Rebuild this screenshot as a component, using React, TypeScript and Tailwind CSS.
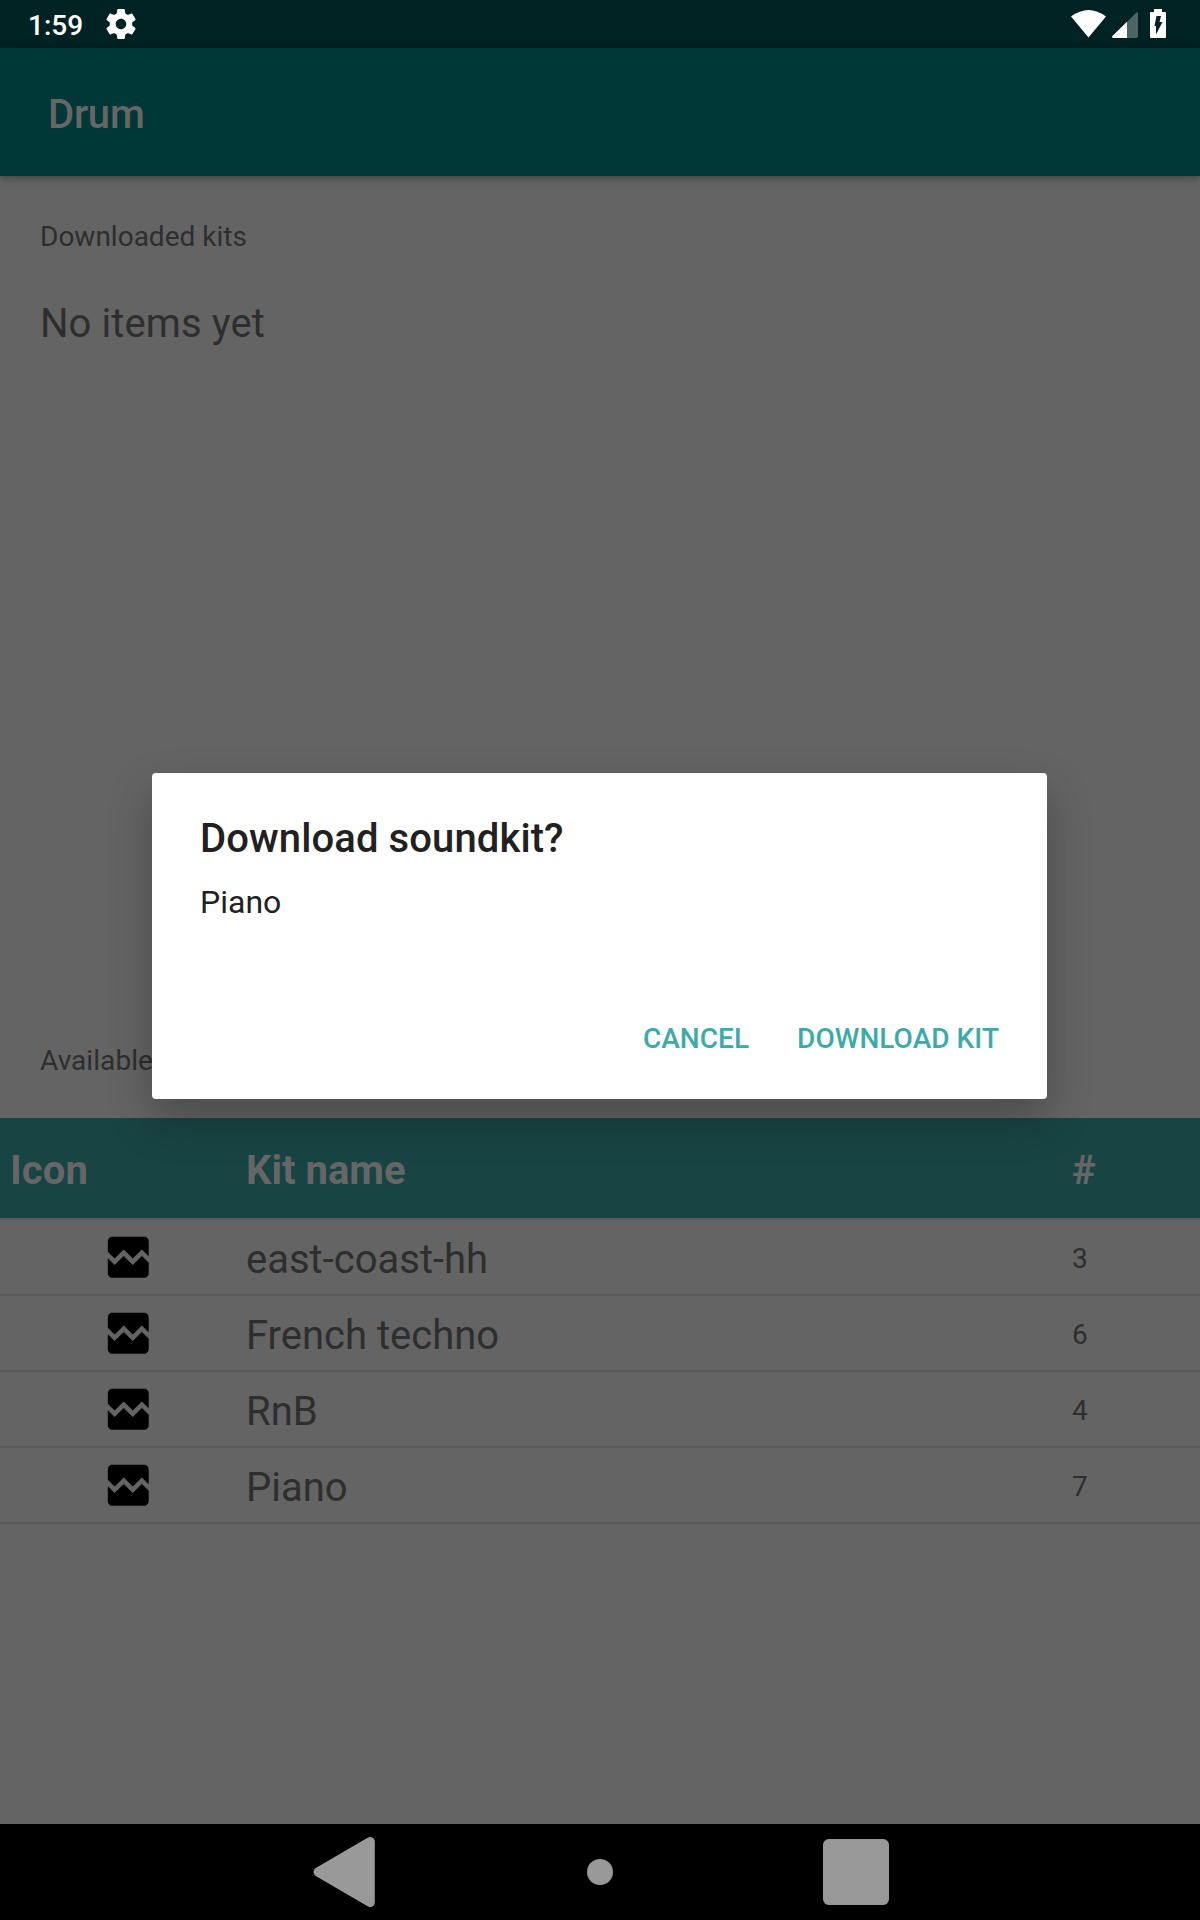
const kits = [
  { name: "east-coast-hh", count: 3 },
  { name: "French techno", count: 6 },
  { name: "RnB", count: 4 },
  { name: "Piano", count: 7 },
];

function BrokenImageIcon() {
  return (
    <svg viewBox="0 0 24 24" className="block h-[54.500px] w-[54.500px] fill-black">
      <path d="M21 5v6.59l-3-3.01-4 4.01-4-4-4 4-3-3.01V5c0-1.1.9-2 2-2h14c1.1 0 2 .9 2 2zm-3 6.42l3 3.01V19c0 1.1-.9 2-2 2H5c-1.1 0-2-.9-2-2v-6.58l3 2.99 4-4 4 4 4-3.99z" />
    </svg>
  );
}

function StatusBar() {
  return (
    <header className="flex h-12 shrink-0 bg-[#002222] text-white">
      <span className="ml-[28px] w-[72px] pt-[2px] text-[28px] leading-[48px] font-medium">1:59</span>
      <svg viewBox="0 0 24 24" className="ml-[3px] mt-[6px] block h-[36px] w-[36px] fill-white">
        <path d="M19.43 12.98c.04-.32.07-.64.07-.98s-.03-.66-.07-.98l2.11-1.65c.19-.15.24-.42.12-.64l-2-3.46c-.12-.22-.39-.3-.61-.22l-2.49 1c-.52-.4-1.08-.73-1.69-.98l-.38-2.65C14.46 2.18 14.25 2 14 2h-4c-.25 0-.46.18-.49.42l-.38 2.65c-.61.25-1.17.59-1.69.98l-2.49-1c-.23-.09-.49 0-.61.22l-2 3.46c-.13.22-.07.49.12.64l2.11 1.65c-.04.32-.07.65-.07.98s.03.66.07.98l-2.11 1.65c-.19.15-.24.42-.12.64l2 3.46c.12.22.39.3.61.22l2.49-1c.52.4 1.08.73 1.69.98l.38 2.65c.03.24.24.42.49.42h4c.25 0 .46-.18.49-.42l.38-2.65c.61-.25 1.17-.59 1.69-.98l2.49 1c.23.09.49 0 .61-.22l2-3.46c.12-.22.07-.49-.12-.64l-2.11-1.65zM12 15.5c-1.93 0-3.5-1.57-3.5-3.5s1.57-3.5 3.5-3.5 3.5 1.57 3.5 3.5-1.57 3.5-3.5 3.5z" />
      </svg>
      <div className="ml-auto mr-[34px] flex">
        <svg viewBox="0 0 36 48" className="block h-12 w-9">
          <path d="M0 16.5Q17.500 3.5 35 16.5L17.500 37.5Z" fill="white" />
        </svg>
        <svg viewBox="0 0 27 48" className="ml-[5px] block h-12 w-[27px]">
          <path d="M26 13.5V36Q26 38 24 38H1Q-.5 37.500 .5 36L24.500 12.500Q26 11.500 26 13.500Z" fill="#4d6464" />
          <path d="M15 21.800V38H1Q-.5 37.500 .5 36Z" fill="white" />
        </svg>
        <svg viewBox="0 0 16 48" className="ml-[11px] block h-12 w-4">
          <path d="M4 9H12V12H15Q16 12 16 13V37Q16 38 15 38H1Q0 38 0 37V13Q0 12 1 12H4Z" fill="white" />
          <path d="M6.500 16H11L9.500 22H12.500L6 34.500V26H4.500Z" fill="#002222" />
        </svg>
      </div>
    </header>
  );
}

function KitTable() {
  return (
    <div>
      <div className="flex h-[102px] border-b-2 border-[#5a5a5a] bg-[#184443] text-[40px] leading-[105px] font-bold text-[#666666]">
        <span className="w-[246px] pl-[10px] tracking-[0.1px]">Icon</span>
        <span className="w-[826px]">Kit name</span>
        <span>#</span>
      </div>
      {kits.map((kit) => (
        <div key={kit.name} className="flex h-[76px] border-b-2 border-[#5a5a5a] text-[#2e2e2e]">
          <span className="w-[246px] pl-[100.700px] pt-[9.700px]">
            <BrokenImageIcon />
          </span>
          <span className="w-[826px] text-[40px] leading-[80px]">{kit.name}</span>
          <span className="text-[28px] leading-[77px]">{kit.count}</span>
        </div>
      ))}
    </div>
  );
}

function DownloadDialog() {
  return (
    <div
      role="dialog"
      className="absolute left-[152px] top-[773px] flex h-[326px] w-[895px] flex-col rounded-[4px] bg-white px-12 text-[#212121] shadow-[0_20px_44px_rgba(0,0,0,0.25)]"
    >
      <h2 className="mt-[42px] text-[40px] leading-[48px] font-medium tracking-[0.1px]">Download soundkit?</h2>
      <p className="mt-[19px] text-[32px] leading-[40px]">Piano</p>
      <div className="mt-[87px] flex justify-end gap-[48px] text-[28px] leading-[60px] font-medium tracking-[0.04px] text-[#3caaaa]">
        <button>CANCEL</button>
        <button>DOWNLOAD KIT</button>
      </div>
    </div>
  );
}

function NavigationBar() {
  return (
    <nav className="flex h-24 shrink-0 bg-black">
      <svg viewBox="0 0 64 96" className="ml-[312px] block h-24 w-16">
        <path d="M6 48L58.300 17.500V78.500Z" fill="#999999" stroke="#999999" strokeWidth="9" strokeLinejoin="round" />
      </svg>
      <span className="ml-[211px] mt-[35px] h-[26px] w-[26px] rounded-full bg-[#999999]" />
      <span className="ml-[210px] mt-[15px] h-[66px] w-[66px] rounded-[6px] bg-[#999999]" />
    </nav>
  );
}

export default function App() {
  return (
    <div className="relative flex h-[1920px] w-[1200px] flex-col overflow-hidden bg-[#646464] font-['Roboto',sans-serif]">
      <StatusBar />
      <div className="h-32 shrink-0 bg-[#003837] pl-12 text-[40px] leading-[134px] font-medium tracking-[-0.2px] text-[#666666] shadow-[0_2px_8px_rgba(0,0,0,0.35)]">
        Drum
      </div>
      <main className="flex-1 text-[#2e2e2e]">
        <section className="h-[824px] pl-10">
          <h2 className="pt-[41px] text-[28px] leading-[40px]">Downloaded kits</h2>
          <p className="mt-[43px] text-[40px] leading-[48px] tracking-[0.08px]">No items yet</p>
        </section>
        <h2 className="h-[118px] pl-10 pt-[41px] text-[28px] leading-[40px] tracking-[0.06px]">Available kits</h2>
        <KitTable />
      </main>
      <NavigationBar />
      <DownloadDialog />
    </div>
  );
}
